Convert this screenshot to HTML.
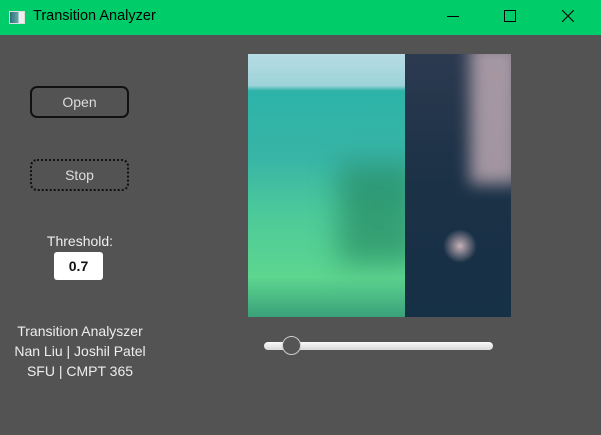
<!DOCTYPE html>
<html><head><style>
body{margin:0;width:601px;height:435px;background:#535353;font-family:"Liberation Sans",sans-serif;position:relative;overflow:hidden}
.tb{position:absolute;left:0;top:0;width:601px;height:35px;background:#00cc6a}
.t{position:absolute;color:#000;font-size:14px}
.btn{position:absolute;left:30px;width:95px;height:28px;border:2px solid #111;border-radius:7px;color:#ddd;font-size:14px;text-align:center;line-height:28px;box-sizing:content-box}
.lbl{position:absolute;color:#eee;font-size:14px;text-align:center;width:160px;left:0}
</style></head><body>
<div class="tb">
<div style="position:absolute;left:9px;top:11px;width:14px;height:11px;border:1px solid #ddd;background:linear-gradient(90deg,#2e6e7e 0,#6aa 60%,#eee 60%)"></div>
<div class="t" style="left:33px;top:8px;font-size:14.5px">Transition Analyzer</div>
<div style="position:absolute;left:447px;top:16px;width:12px;height:1px;background:#000"></div>
<div style="position:absolute;left:504px;top:10px;width:10px;height:10px;border:1px solid #000"></div>
<svg style="position:absolute;left:562px;top:10px" width="12" height="12"><path d="M0 0L12 12M12 0L0 12" stroke="#000" stroke-width="1.1"/></svg>
</div>
<div class="btn" style="top:86px">Open</div>
<div class="btn" style="top:159px;border-style:dotted">Stop</div>
<div class="lbl" style="top:233px">Threshold:</div>
<div style="position:absolute;left:54px;top:252px;width:49px;height:28px;background:#fff;border-radius:3px;font-size:14px;line-height:28px;text-align:center;font-weight:bold;color:#111">0.7</div>
<div class="lbl" style="top:323px">Transition Analyszer</div>
<div class="lbl" style="top:343px">Nan Liu | Joshil Patel</div>
<div class="lbl" style="top:363px">SFU | CMPT 365</div>
<div style="position:absolute;left:248px;top:54px;width:263px;height:263px;overflow:hidden">
<div style="position:absolute;left:0;top:0;width:157px;height:263px;background:linear-gradient(180deg,#b6dde3 0,#9ed3da 12%,#2db3a8 14%,#38b5a6 40%,#4cc99a 60%,#5dd68f 85%,#3aa07a 100%)"></div>
<div style="position:absolute;left:90px;top:110px;width:80px;height:100px;background:#1e7a56;opacity:.55;filter:blur(14px)"></div>
<div style="position:absolute;left:157px;top:0;width:106px;height:263px;background:linear-gradient(180deg,#2c3a50 0,#1b3146 50%,#163046 100%)"></div>
<div style="position:absolute;left:222px;top:-10px;width:50px;height:140px;background:#c4aeb8;opacity:.8;filter:blur(8px)"></div>
<div style="position:absolute;left:195px;top:175px;width:34px;height:34px;border-radius:50%;background:radial-gradient(#c8b0b8,rgba(200,170,180,0) 70%)"></div>
</div>
<div style="position:absolute;left:264px;top:342px;width:229px;height:8px;border-radius:4px;background:linear-gradient(#fafafa,#d8d8d8)"></div>
<div style="position:absolute;left:282px;top:336px;width:17px;height:17px;border-radius:50%;background:#555;border:1px solid #ccc"></div>
</body></html>
